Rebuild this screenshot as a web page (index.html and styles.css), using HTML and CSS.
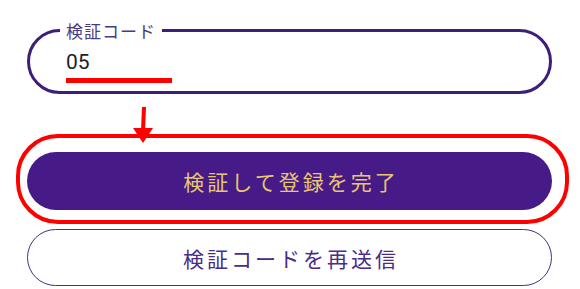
FILE: index.html
```html
<!DOCTYPE html>
<html lang="ja">
<head>
<meta charset="utf-8">
<link rel="stylesheet" href="styles.css">
</head>
<body>
<div class="page">
  <div class="field">
    <span class="field-label">検証コード</span>
    <div class="field-value">05</div>
    <span class="mark-underline"></span>
  </div>
  <div class="actions">
    <svg class="mark-arrow" width="30" height="42" viewBox="0 0 30 42">
      <line x1="14" y1="2" x2="13" y2="26" stroke="#ff0000" stroke-width="4"/>
      <polygon points="3,23 23,23 13,38" fill="#ff0000"/>
    </svg>
    <span class="mark-box"></span>
    <button class="btn btn-primary">検証して登録を完了</button>
    <button class="btn btn-outline">検証コードを再送信</button>
  </div>
</div>
</body>
</html>
```
FILE: styles.css
```css
html, body {
  margin: 0;
  padding: 0;
  background: #ffffff;
}
body {
  font-family: "Noto Sans CJK JP", "Noto Sans", sans-serif;
}
.page {
  width: 525px;
  padding: 29px 0 0 27px;
}
.field {
  position: relative;
  box-sizing: border-box;
  height: 65px;
  border: 3px solid #3e1e78;
  border-radius: 33px;
  padding: 20px 0 0 36px;
}
.field-label {
  position: absolute;
  top: -11px;
  left: 30px;
  padding: 0 6px 0 6px;
  background: #ffffff;
  color: #4b3a80;
  font-size: 17px;
  line-height: 20px;
  letter-spacing: 1px;
}
.field-value {
  font-family: Roboto, "Liberation Sans", sans-serif;
  font-size: 21px;
  line-height: 21px;
  color: #222222;
}
.mark-underline {
  position: absolute;
  left: 36px;
  top: 46px;
  width: 106px;
  height: 5px;
  background: #ff0000;
}
.actions {
  position: relative;
  display: flex;
  flex-direction: column;
  gap: 19px;
  margin-top: 58px;
}
.btn {
  display: flex;
  align-items: center;
  justify-content: center;
  box-sizing: border-box;
  width: 525px;
  margin: 0;
  font-family: "Noto Sans CJK JP", "Noto Sans", sans-serif;
  font-size: 21px;
  letter-spacing: 3px;
  padding: 0 0 0 3px;
  cursor: pointer;
}
.btn-primary {
  height: 58px;
  border: none;
  border-radius: 29px;
  background: #461a87;
  color: #e9c770;
}
.btn-outline {
  height: 57px;
  border: 1.5px solid #4b2c87;
  border-radius: 29px;
  background: #ffffff;
  color: #4b2c87;
}
.mark-arrow {
  position: absolute;
  left: 103px;
  top: -47px;
  z-index: 2;
}
.mark-box {
  position: absolute;
  left: -11px;
  top: -18px;
  width: 545px;
  height: 82px;
  border: 4px solid #ff0000;
  border-radius: 42px;
  pointer-events: none;
}
```
